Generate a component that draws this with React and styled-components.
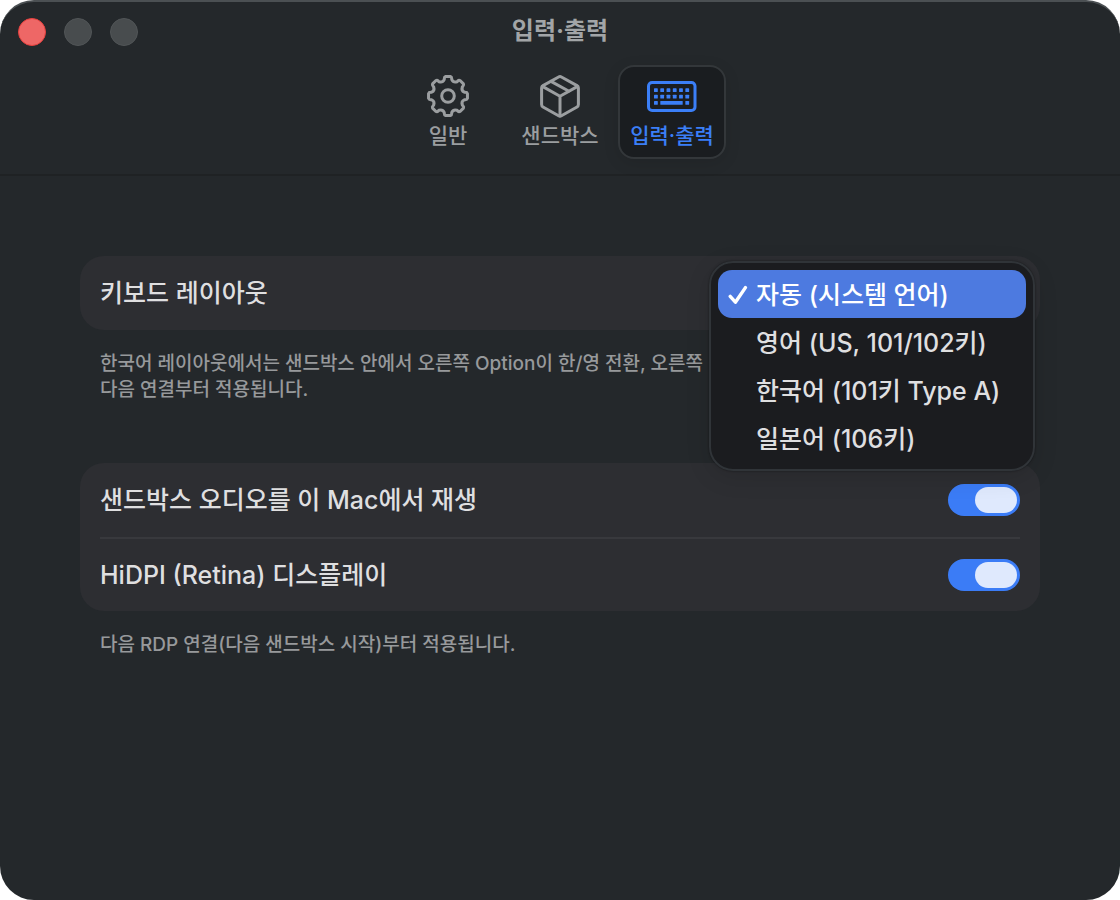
import { useState } from "react";
import styled, { createGlobalStyle } from "styled-components";

const LAYOUTS = ["자동 (시스템 언어)", "영어 (US, 101/102키)", "한국어 (101키 Type A)", "일본어 (106키)"];

// 톱니 8개짜리 기어 외곽선
const polar = (r, deg) => {
    const a = (deg * Math.PI) / 180;
    return `${(22 + r * Math.sin(a)).toFixed(2)} ${(22 - r * Math.cos(a)).toFixed(2)}`;
};
const GEAR_PATH =
    `M${polar(19.6, -7)}` +
    Array.from({ length: 8 }, (_, i) => {
        const t = i * 45;
        return (
            `L${polar(19.6, t + 7)}Q${polar(19.4, t + 11)} ${polar(17.8, t + 12)}` +
            `L${polar(16.8, t + 13)}Q${polar(14.2, t + 22.5)} ${polar(16.8, t + 32)}` +
            `L${polar(17.8, t + 33)}Q${polar(19.4, t + 34)} ${polar(19.6, t + 38)}`
        );
    }).join("") +
    "Z";

function GearIcon() {
    return (
        <svg width="44" height="44" viewBox="0 0 44 44" fill="none" stroke="currentColor" strokeWidth="3" strokeLinejoin="round">
            <path d={GEAR_PATH} />
            <circle cx="22" cy="22" r="6.3" />
        </svg>
    );
}

function BoxIcon() {
    return (
        <svg width="44" height="44" viewBox="0 0 44 44" fill="none" stroke="currentColor" strokeWidth="3" strokeLinejoin="round" strokeLinecap="round">
            <path d="M20.6 3 5 11.6Q3.6 12.4 3.6 14V30.6Q3.6 32.2 5 33L20.6 41.8Q22 42.6 23.4 41.8L39 33Q40.4 32.2 40.4 30.6V14Q40.4 12.4 39 11.6L23.4 3Q22 2.2 20.6 3Z" />
            <path d="M4.4 12.4 22 22.2 39.6 12.4M22 22.2V41.8M13 7.4 31 17.2" />
        </svg>
    );
}

function KeyboardIcon() {
    const keys = [0, 1, 2, 3, 4, 5];
    return (
        <svg width="50" height="44" viewBox="0 0 50 44" fill="currentColor">
            <rect x="1.5" y="8.5" width="46.5" height="28" rx="3.6" fill="none" stroke="currentColor" strokeWidth="3" />
            {keys.map((k) => (
                <rect key={`a${k}`} x={7 + k * 6.27} y="14.3" width="3.8" height="3.8" rx="0.6" />
            ))}
            {keys.map((k) => (
                <rect key={`b${k}`} x={7 + k * 6.27} y="20.7" width="3.8" height="3.8" rx="0.6" />
            ))}
            <rect x="7" y="27" width="3.8" height="3.8" rx="0.6" />
            <rect x="13.3" y="27" width="22.4" height="3.8" rx="0.6" />
            <rect x="38.35" y="27" width="3.8" height="3.8" rx="0.6" />
        </svg>
    );
}

const TABS = [
    { name: "일반", Icon: GearIcon },
    { name: "샌드박스", Icon: BoxIcon },
    { name: "입력·출력", Icon: KeyboardIcon },
];

function App() {
    const [tab, setTab] = useState("입력·출력");
    const [layout, setLayout] = useState(LAYOUTS[0]);
    const [audio, setAudio] = useState(true);
    const [hidpi, setHidpi] = useState(true);

    return (
        <>
            <GlobalStyle />
            <Window>
                <Header>
                    <TitleBar>
                        <Lights>
                            <Light $close aria-label="닫기" />
                            <Light aria-label="최소화" />
                            <Light aria-label="확대" />
                        </Lights>
                        <Title>{tab}</Title>
                    </TitleBar>
                    <Tabs>
                        {TABS.map(({ name, Icon }) => (
                            <Tab key={name} $active={tab === name} onClick={() => setTab(name)}>
                                <Icon />
                                {name}
                            </Tab>
                        ))}
                    </Tabs>
                </Header>

                <Content>
                    {/* 키보드 */}
                    <Section>
                        <Card>
                            <Row>
                                <span id="layout-label">키보드 레이아웃</span>
                                <Menu role="listbox" aria-labelledby="layout-label">
                                    {LAYOUTS.map((name) => (
                                        <MenuItem
                                            key={name}
                                            role="option"
                                            aria-selected={layout === name}
                                            $selected={layout === name}
                                            onClick={() => setLayout(name)}
                                        >
                                            <CheckSlot>
                                                {layout === name && (
                                                    <svg width="20" height="20" viewBox="0 0 20 20" fill="none" stroke="currentColor" strokeWidth="3.4" strokeLinecap="round" strokeLinejoin="round">
                                                        <path d="M2.2 12.4 7.4 18.2 17.4 3.6" />
                                                    </svg>
                                                )}
                                            </CheckSlot>
                                            {name}
                                        </MenuItem>
                                    ))}
                                </Menu>
                            </Row>
                        </Card>
                        <Note>
                            한국어 레이아웃에서는 샌드박스 안에서 오른쪽 Option이 한/영 전환, 오른쪽
                            <br />
                            다음 연결부터 적용됩니다.
                        </Note>
                    </Section>

                    {/* 오디오, 디스플레이 */}
                    <Section>
                        <Card>
                            <Row>
                                <label htmlFor="audio">샌드박스 오디오를 이 Mac에서 재생</label>
                                <Switch id="audio" checked={audio} onChange={(e) => setAudio(e.target.checked)} />
                            </Row>
                            <Row>
                                <label htmlFor="hidpi">HiDPI (Retina) 디스플레이</label>
                                <Switch id="hidpi" checked={hidpi} onChange={(e) => setHidpi(e.target.checked)} />
                            </Row>
                        </Card>
                        <Note>다음 RDP 연결(다음 샌드박스 시작)부터 적용됩니다.</Note>
                    </Section>
                </Content>
            </Window>
        </>
    );
}

const GlobalStyle = createGlobalStyle`
    * {
        box-sizing: border-box;
    }

    body {
        margin: 0;
        background-color: white;
        font-family: Inter, "Noto Sans CJK KR", sans-serif;
    }

    button {
        padding: 0;
        border: none;
        background: none;
        font-family: inherit;
        cursor: pointer;
    }
`;

const Window = styled.main`
    min-height: 100vh;
    border-top: 2px solid #4b5053;
    border-radius: 34px;
    background-color: #24282b;
    color: #dfdfe0;
`;

const Header = styled.header`
    padding-bottom: 15px;
    border-bottom: 2px solid #1f2224;
`;

const TitleBar = styled.div`
    display: grid;
    grid-template-columns: 1fr auto 1fr;
    align-items: center;
    height: 60px;
    padding: 0 18px;
`;

const Lights = styled.div`
    display: flex;
    gap: 18px;
`;

const Light = styled.button`
    width: 28px;
    height: 28px;
    border: 1px solid ${(props) => (props.$close ? "#e8403e" : "#515557")};
    border-radius: 50%;
    background-color: ${(props) => (props.$close ? "#ee6766" : "#484c4e")};
`;

const Title = styled.h1`
    margin: 0;
    padding-bottom: 2px;
    color: #a2a5a7;
    font-size: 24px;
    font-weight: 700;
    line-height: 32px;
`;

const Tabs = styled.nav`
    display: flex;
    justify-content: center;
    gap: 4px;
    padding-top: 3px;
`;

const Tab = styled.button`
    display: flex;
    flex-direction: column;
    align-items: center;
    width: 108px;
    height: 94px;
    padding-top: 7px;
    border: 2px solid ${(props) => (props.$active ? "#33373a" : "transparent")};
    border-radius: 16px;
    background-color: ${(props) => (props.$active ? "#1a1d20" : "transparent")};
    box-shadow: ${(props) => (props.$active ? "0 4px 16px rgba(0, 0, 0, 0.1)" : "none")};
    color: ${(props) => (props.$active ? "#3b7ff7" : "#9b9ea0")};
    font-size: 21px;
    font-weight: 500;
    line-height: 36px;
    white-space: nowrap;
`;

const Content = styled.div`
    display: flex;
    flex-direction: column;
    gap: 60px;
    padding: 80px;
`;

const Section = styled.section`
    display: flex;
    flex-direction: column;
    gap: 21px;
`;

const Card = styled.div`
    border-radius: 24px;
    background-color: #2d2e32;
`;

const Row = styled.div`
    position: relative;
    display: flex;
    align-items: center;
    justify-content: space-between;
    min-height: 74px;
    margin: 0 20px;
    font-size: 25px;
    font-weight: 500;
    line-height: 32px;

    & + & {
        border-top: 2px solid #38393d;
    }
`;

const Note = styled.p`
    margin: 0;
    padding: 0 20px;
    color: #97999b;
    font-size: 19px;
    font-weight: 500;
    line-height: 26px;
`;

const Menu = styled.div`
    position: absolute;
    z-index: 1;
    top: 5px;
    right: -15px;
    width: 326px;
    padding: 7px;
    border: 2px solid #303438;
    border-radius: 24px;
    background-color: #1b1c1f;
    box-shadow: 0 0 2px rgba(0, 0, 0, 0.5), 0 6px 24px rgba(0, 0, 0, 0.12);
`;

const MenuItem = styled.button`
    display: flex;
    align-items: center;
    width: 100%;
    height: 48px;
    padding: 0 0 3px 10px;
    border-radius: 14px;
    background-color: ${(props) => (props.$selected ? "#4d7ae0" : "transparent")};
    color: ${(props) => (props.$selected ? "white" : "#dfdfe0")};
    font-size: 25px;
    font-weight: 500;
    white-space: nowrap;
`;

const CheckSlot = styled.span`
    display: flex;
    width: 28px;
    padding-top: 2px;
`;

const Switch = styled.input.attrs({ type: "checkbox", role: "switch" })`
    appearance: none;
    display: flex;
    justify-content: ${(props) => (props.checked ? "flex-end" : "flex-start")};
    width: 72px;
    height: 32px;
    margin: 0;
    padding: 3px;
    border-radius: 16px;
    background-color: ${(props) => (props.checked ? "#3b7cf6" : "#4a4c50")};
    cursor: pointer;

    &::before {
        content: "";
        width: 42px;
        height: 26px;
        border-radius: 13px;
        background-color: #dfe9fd;
    }
`;

export default App;
